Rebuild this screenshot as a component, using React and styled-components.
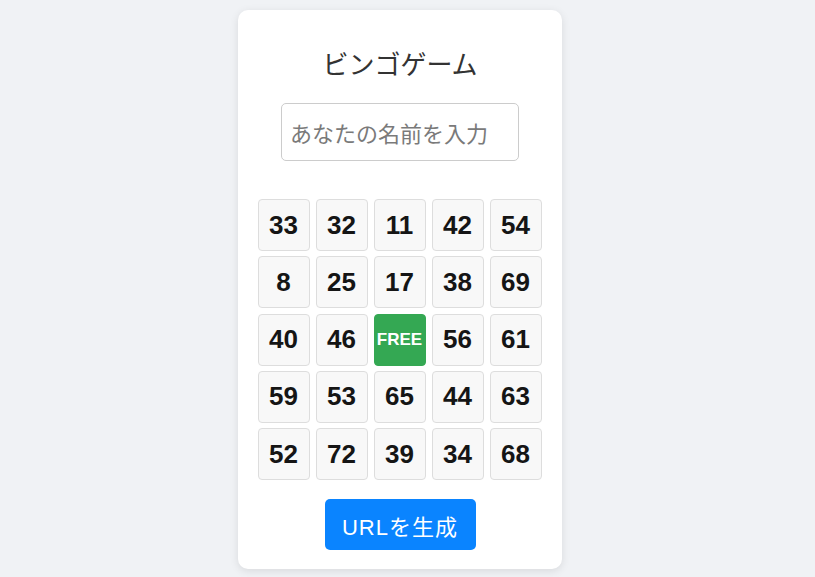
import React from "react";
import styled, { createGlobalStyle } from "styled-components";

const GlobalStyle = createGlobalStyle`
  html, body {
    margin: 0;
    padding: 0;
    background: #f0f2f5;
    font-family: "Liberation Sans", "Noto Sans CJK JP", sans-serif;
  }
  * { box-sizing: border-box; }
`;

const Page = styled.div`
  display: flex;
  justify-content: center;
  padding: 10px 15px 0 0;
  min-height: 577px;
`;

const Card = styled.div`
  width: 324px;
  height: 559px;
  background: #ffffff;
  border-radius: 10px;
  box-shadow: 0 2px 8px rgba(0, 0, 0, 0.1);
  padding: 20px 20px 18px;
  display: flex;
  flex-direction: column;
  align-items: center;
`;

const Title = styled.h1`
  margin: 15px 0 0;
  height: 36px;
  line-height: 36px;
  font-size: 26px;
  font-weight: normal;
  color: #333333;
  font-family: "Noto Sans CJK JP", sans-serif;
`;

const NameInput = styled.input`
  margin-top: 22px;
  width: 238px;
  height: 58px;
  padding: 0 8px;
  font-size: 22px;
  font-family: "Noto Sans CJK JP", sans-serif;
  border: 1px solid #cccccc;
  border-radius: 5px;
  outline: none;
  color: #333;
  &::placeholder {
    color: #7a7a7a;
  }
`;

const Grid = styled.div`
  margin-top: 38px;
  margin-left: -1px;
  display: grid;
  grid-template-columns: repeat(5, 52px);
  grid-auto-rows: 52px;
  column-gap: 6px;
  row-gap: 5.3px;
`;

const Cell = styled.div`
  display: flex;
  align-items: center;
  justify-content: center;
  border-radius: 4px;
  border: 1px solid ${(p) => (p.$free ? "#34a853" : "#dddddd")};
  background: ${(p) => (p.$free ? "#34a853" : "#f8f8f8")};
  color: ${(p) => (p.$free ? "#ffffff" : "#151515")};
  font-family: "Liberation Sans", sans-serif;
  font-weight: bold;
  font-size: ${(p) => (p.$free ? "17px" : "26px")};
`;

const Button = styled.button`
  margin-top: 19px;
  width: 151px;
  height: 51px;
  border: none;
  border-radius: 5px;
  background: #0a84ff;
  color: #ffffff;
  font-size: 22px;
  letter-spacing: 1px;
  font-family: "Liberation Sans", "Noto Sans CJK JP", sans-serif;
  cursor: pointer;
`;

const numbers = [
  33, 32, 11, 42, 54,
  8, 25, 17, 38, 69,
  40, 46, "FREE", 56, 61,
  59, 53, 65, 44, 63,
  52, 72, 39, 34, 68,
];

export default function App() {
  return (
    <>
      <GlobalStyle />
      <Page>
        <Card>
          <Title>ビンゴゲーム</Title>
          <NameInput placeholder="あなたの名前を入力" />
          <Grid>
            {numbers.map((n, i) => (
              <Cell key={i} $free={n === "FREE"}>
                {n}
              </Cell>
            ))}
          </Grid>
          <Button>URLを生成</Button>
        </Card>
      </Page>
    </>
  );
}
